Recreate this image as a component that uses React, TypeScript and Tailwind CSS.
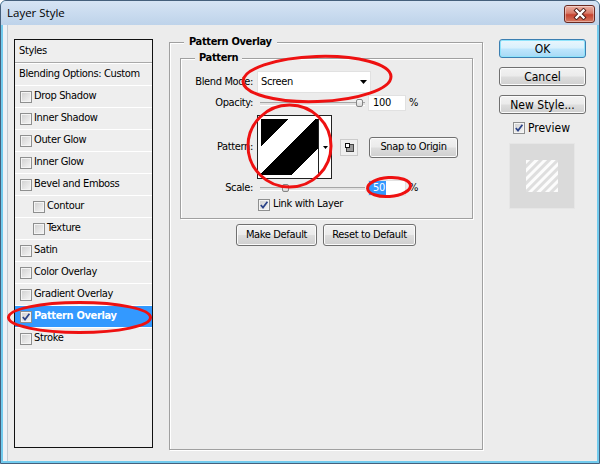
import React from "react";

const FONT =
  "font-['DejaVu_Sans_Condensed','DejaVu_Sans',sans-serif] [font-stretch:condensed]";

function Check({ checked = false }: { checked?: boolean }) {
  return (
    <div className="flex h-[12px] w-[12px] shrink-0 items-center justify-center border border-[#8e8f8f] bg-[linear-gradient(135deg,#cfcfcf,#f6f6f6)] shadow-[inset_0_0_0_1px_#f4f4f4]">
      {checked && (
        <svg width="10" height="10" viewBox="0 0 10 10">
          <path d="M1.8 5 L4 7.6 L8.4 1.8" fill="none" stroke="#2a4288" strokeWidth="1.7" />
        </svg>
      )}
    </div>
  );
}

function Btn({ children, className }: { children: React.ReactNode; className: string }) {
  return (
    <div
      className={
        "flex items-center justify-center rounded-[3px] border border-[#707070] bg-[linear-gradient(#f2f2f2,#ebebeb_48%,#dddddd_52%,#cfcfcf)] shadow-[inset_0_0_0_1px_#fbfbfb] " +
        className
      }
    >
      {children}
    </div>
  );
}

function Slider({ thumb }: { thumb: string }) {
  return (
    <div className="relative ml-[3px] flex h-[16px] w-[105px] items-center">
      <div className="h-[3px] w-full border-t border-[#a6a6a6] bg-[#e2e2e2] shadow-[0_1px_0_#ffffff]" />
      <div
        className={
          "absolute top-[4px] h-[8px] w-[7px] rounded-[2px] border border-[#858585] bg-[linear-gradient(#f7f7f7,#d9d9d9)] " +
          thumb
        }
      />
    </div>
  );
}

const rows: { label: string; indent?: boolean; selected?: boolean }[] = [
  { label: "Drop Shadow" },
  { label: "Inner Shadow" },
  { label: "Outer Glow" },
  { label: "Inner Glow" },
  { label: "Bevel and Emboss" },
  { label: "Contour", indent: true },
  { label: "Texture", indent: true },
  { label: "Satin" },
  { label: "Color Overlay" },
  { label: "Gradient Overlay" },
  { label: "Pattern Overlay", selected: true },
  { label: "Stroke" },
];

export default function App() {
  return (
    <div
      className={
        "relative h-[464px] w-[600px] overflow-hidden bg-white text-[11px] tracking-[-0.35px] text-black " + FONT
      }
    >
      <div className="flex h-full w-full flex-col rounded-t-[6px] border border-[#45607c] bg-[#72cbee]">
        {/* Title bar */}
        <div className="flex h-[24px] shrink-0 items-start rounded-t-[5px] bg-[linear-gradient(#d6e4f4,#bed3ea)]">
          <span className="ml-[6px] mt-[4px] font-['Open_Sans',sans-serif] text-[11.5px] leading-[16px] tracking-normal [font-stretch:normal]">
            Layer Style
          </span>
          <div className="ml-auto mr-[4px] mt-[4px] flex h-[18px] w-[31px] items-center justify-center rounded-[3px] border border-[#6a2a22] bg-[linear-gradient(#eab0a4,#d87a68_45%,#c5422f_55%,#d67a62)] shadow-[inset_0_0_0_1px_rgba(255,255,255,0.4)]">
            <svg width="14" height="12" viewBox="0 0 14 12">
              <g strokeLinecap="square">
                <path d="M3.5 2.5 L10.5 9.5 M10.5 2.5 L3.5 9.5" stroke="#4a1c16" strokeWidth="4.2" />
                <path d="M3.5 2.5 L10.5 9.5 M10.5 2.5 L3.5 9.5" stroke="#ffffff" strokeWidth="2.4" />
              </g>
            </svg>
          </div>
        </div>

        {/* Body */}
        <div className="mx-[2px] mb-[2px] flex flex-1">
          <div className="w-[5px] border-r border-[#c4cad2] bg-[#eef1f5]" />
          <div className="flex flex-1 items-start bg-[#ececec]">
            {/* Styles list */}
            <div className="ml-[6px] mt-[14px] flex h-[409px] w-[139px] flex-col border border-[#111111] bg-[#eeeeee]">
              <div className="flex h-[22px] items-center pl-[4px]">Styles</div>
              <div className="h-[2px] border-t border-[#a9a9a9] bg-white" />
              <div className="flex h-[22px] items-center border-b border-white pl-[4px]">
                Blending Options: Custom
              </div>
              {rows.map((r) => (
                <div
                  key={r.label}
                  className={
                    "flex h-[22px] items-center border-b border-white " +
                    (r.indent ? "pl-[18px] " : "pl-[5px] ") +
                    (r.selected ? "bg-[#3399ff] font-bold text-white" : "")
                  }
                >
                  <Check checked={r.selected} />
                  <span className="ml-[2px]">{r.label}</span>
                </div>
              ))}
            </div>

            {/* Pattern Overlay group */}
            <div className="ml-[16px] mt-[17px] flex h-[408px] w-[314px] flex-col border border-[#a0a0a0] shadow-[1px_1px_0_#ffffff,inset_1px_1px_0_#ffffff]">
              <div className="-mt-[8px] ml-[14px] w-fit bg-[#ececec] px-[5px] font-bold leading-[14px]">
                Pattern Overlay
              </div>

              {/* Pattern inner group */}
              <div className="ml-[10px] mt-[9px] flex h-[161px] w-[293px] flex-col border border-[#a0a0a0] shadow-[1px_1px_0_#ffffff,inset_1px_1px_0_#ffffff]">
                <div className="-mt-[8px] ml-[14px] w-fit bg-[#ececec] px-[4px] font-bold leading-[14px]">
                  Pattern
                </div>

                {/* Blend mode */}
                <div className="mt-[6px] flex h-[22px] items-center">
                  <div className="w-[72px] text-right">Blend Mode:</div>
                  <div className="ml-[4px] flex h-[22px] w-[114px] items-center border border-[#e1e1e1] bg-white pl-[3px]">
                    <span>Screen</span>
                    <svg className="ml-auto mr-[3px]" width="7" height="4" viewBox="0 0 7 4">
                      <path d="M0 0 H7 L3.5 4 Z" fill="#000" />
                    </svg>
                  </div>
                </div>

                {/* Opacity */}
                <div className="mt-[2px] flex h-[16px] items-center">
                  <div className="w-[72px] text-right">Opacity:</div>
                  <div className="ml-[4px] flex items-center">
                    <Slider thumb="left-[96px]" />
                    <div className="ml-[3px] flex h-[16px] w-[38px] items-center border border-[#e1e1e1] bg-white">
                      <span className="pl-[4px]">100</span>
                    </div>
                    <span className="ml-[3px]">%</span>
                  </div>
                </div>

                {/* Pattern */}
                <div className="mt-[4px] flex h-[64px] items-center">
                  <div className="w-[72px] text-right">Pattern:</div>
                  <div className="ml-[4px] flex h-[64px] w-[75px] items-center border border-[#222222] bg-white pl-[3px]">
                    <svg
                      width="58"
                      height="56"
                      viewBox="0 0 58 56"
                      shapeRendering="crispEdges"
                      className="border-r border-[#222222]"
                    >
                      <rect width="58" height="56" fill="#fff" />
                      <polygon points="0,0 27,0 0,27" fill="#000" />
                      <polygon points="55,0 58,0 58,30 32,56 0,56 0,55" fill="#000" />
                    </svg>
                    <svg className="ml-[4px]" width="5" height="3" viewBox="0 0 5 3">
                      <path d="M0 0 H5 L2.5 3 Z" fill="#000" />
                    </svg>
                  </div>
                  <div className="ml-[8px] flex h-[17px] w-[18px] items-center justify-center border border-[#cbcbcb] bg-[#efefef]">
                    <svg width="9" height="9" viewBox="0 0 9 9" shapeRendering="crispEdges">
                      <rect x="1.5" y="1.5" width="7" height="7" fill="#9a9a9a" stroke="#444" strokeWidth="1" />
                      <rect x="0.5" y="0.5" width="4" height="4" fill="#fff" stroke="#111" strokeWidth="1" />
                    </svg>
                  </div>
                  <Btn className="ml-[11px] h-[21px] w-[89px]">Snap to Origin</Btn>
                </div>

                {/* Scale */}
                <div className="mt-[1px] flex h-[16px] items-center">
                  <div className="w-[72px] text-right">Scale:</div>
                  <div className="ml-[4px] flex items-center">
                    <Slider thumb="left-[22px]" />
                    <div className="ml-[3px] flex h-[16px] w-[38px] items-center border border-[#e1e1e1] bg-white">
                      <span className="bg-[#3399ff] pl-[4px] pr-[1px] leading-[14px] text-white">50</span>
                    </div>
                    <span className="ml-[3px]">%</span>
                  </div>
                </div>

                {/* Link with layer */}
                <div className="ml-[77px] mt-[2px] flex h-[13px] items-center">
                  <Check checked />
                  <span className="ml-[3px]">Link with Layer</span>
                </div>
              </div>

              <div className="mt-[5px] flex justify-center gap-[6px]">
                <Btn className="h-[22px] w-[81px]">Make Default</Btn>
                <Btn className="h-[22px] w-[93px]">Reset to Default</Btn>
              </div>
            </div>

            {/* Right column */}
            <div className="ml-[16px] mt-[14px] flex w-[87px] flex-col text-[12px] tracking-normal">
              <div className="flex h-[19px] items-center justify-center rounded-[3px] border border-[#3c7fb1] bg-[linear-gradient(#eaf6fd,#d9f0fc_48%,#bee6fd_52%,#a7d9f5)] shadow-[inset_0_0_0_1px_#8ee3fb]">
                OK
              </div>
              <Btn className="mt-[9px] h-[19px]">Cancel</Btn>
              <Btn className="mt-[9px] h-[19px]">New Style...</Btn>
              <div className="ml-[14px] mt-[8px] flex h-[12px] items-center">
                <Check checked />
                <span className="ml-[3px]">Preview</span>
              </div>
              <div className="ml-[10px] mt-[9px] flex h-[66px] w-[66px] items-center justify-center border border-[#e6e6e6] bg-[#dadada]">
                <svg width="32" height="32" viewBox="0 0 32 32">
                  <defs>
                    <pattern id="pv" width="6" height="6" patternUnits="userSpaceOnUse" patternTransform="rotate(45)">
                      <rect width="3" height="6" fill="#ffffff" />
                    </pattern>
                  </defs>
                  <rect width="32" height="32" fill="#dedede" />
                  <rect width="32" height="32" fill="url(#pv)" opacity="0.9" />
                </svg>
              </div>
            </div>
          </div>
        </div>
      </div>

      {/* Red annotation marks */}
      <svg className="pointer-events-none absolute left-0 top-0" width="600" height="464" viewBox="0 0 600 464">
        <g fill="none" stroke="#ee1111" strokeWidth="3">
          <ellipse cx="317" cy="79" rx="74" ry="22.5" transform="rotate(-2 317 79)" />
          <ellipse cx="289.5" cy="146" rx="41.5" ry="41" />
          <ellipse cx="389" cy="187" rx="21.5" ry="9.5" transform="rotate(-4 389 187)" />
          <ellipse cx="79.5" cy="317.5" rx="71" ry="15" />
        </g>
      </svg>
    </div>
  );
}
